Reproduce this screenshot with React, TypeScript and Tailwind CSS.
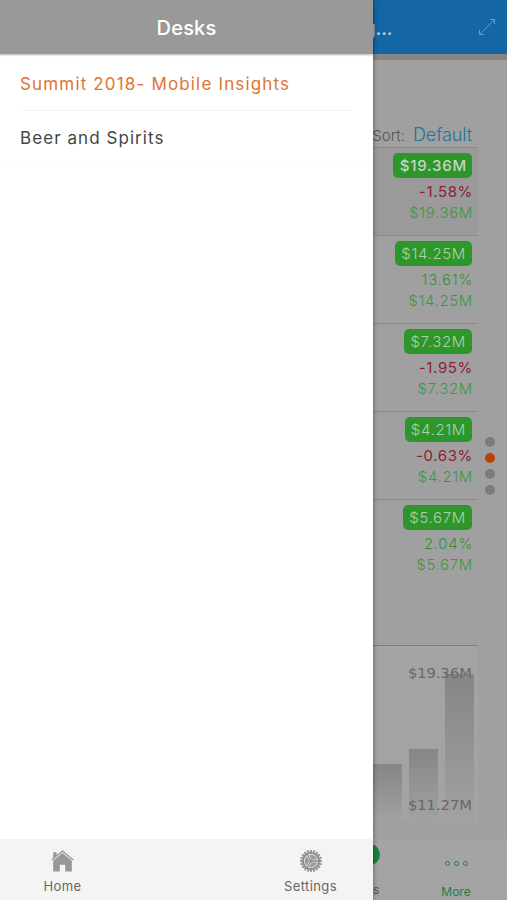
import { clsx } from "clsx";

const metrics = [
  { value: "$19.36M", change: "-1.58%", down: true, selected: true },
  { value: "$14.25M", change: "13.61%", down: false, selected: false },
  { value: "$7.32M", change: "-1.95%", down: true, selected: false },
  { value: "$4.21M", change: "-0.63%", down: true, selected: false },
  { value: "$5.67M", change: "2.04%", down: false, selected: false },
];

const bars = [56, 71, 146];
const gearTeeth = Array.from({ length: 20 }, (_, i) => i * 18);

function HomeIcon() {
  return (
    <svg className="h-6 w-6" viewBox="0 0 24 24" fill="#979797">
      <path d="M2.2 3.2h3.4v3.6L2.2 9.800z" />
      <path d="M11.500 1.200 .3 10.600l.7.8L11.500 2.900 22 11.400l.7-.8z" />
      <path d="M11.500 4.100 2.200 11.500V22.600h6.600v-6.800h5.400v6.800h6.600V11.500z" />
    </svg>
  );
}

function GearIcon() {
  return (
    <svg className="h-6 w-6" viewBox="0 0 24 24" fill="none" stroke="#8e8e8e">
      {gearTeeth.map((angle) => (
        <path key={angle} d="M11 3.200 11.400 1h1.200l.4 2.200z" fill="#8e8e8e" strokeWidth=".3" transform={`rotate(${angle} 12 12)`} />
      ))}
      <circle cx="12" cy="12" r="8" strokeWidth="2.200" />
      <circle cx="12" cy="12" r="6.600" fill="#9c9c9c" stroke="#dedede" strokeWidth=".8" />
      <path d="M12 12H19M12 12 8.500 5.940M12 12 8.500 18.060" stroke="#e2e2e2" strokeWidth="2.800" />
      <path d="M12 12H19.500M12 12 8.250 5.500M12 12 8.250 18.500" strokeWidth="1.300" />
      <circle cx="12" cy="12" r="1.700" fill="#8e8e8e" stroke="none" />
    </svg>
  );
}

function ExpandIcon() {
  return (
    <svg className="h-[18px] w-[18px]" viewBox="0 0 18 18" fill="none" stroke="#6a9dc5" strokeWidth="1">
      <path d="M1.500 16.500 16.500 1.500M12 1.500h4.500V6M1.500 12v4.500H6" />
    </svg>
  );
}

function Drawer() {
  return (
    <aside className="relative z-10 flex w-[373px] shrink-0 flex-col bg-white shadow-[0_0_5px_rgba(0,0,0,0.45)]">
      <header className="flex h-[54px] items-center justify-center bg-[#999999] pt-px text-[20px] font-medium tracking-[0.2px] text-white shadow-[0_1px_2px_rgba(0,0,0,0.3)]">
        Desks
      </header>
      <nav className="flex flex-1 flex-col pl-5 text-[17px] tracking-[1.160px]">
        <div className="mr-[21px] flex h-[57px] items-center border-b border-[#f4f4f4] pt-[5px] text-[#df7432]">
          Summit 2018- Mobile Insights
        </div>
        <div className="-ml-5 flex h-[55px] items-center border-b border-[#fbfbfb] pt-px pl-5 tracking-[1.060px] text-[#444444]">
          Beer and Spirits
        </div>
      </nav>
      <footer className="flex h-[61px] justify-between bg-[#f4f4f4] text-[13px] tracking-[0.4px] text-[#666666]">
        <div className="flex w-[125px] flex-col items-center pt-[10px]">
          <HomeIcon />
          <span className="mt-[3px] leading-5">Home</span>
        </div>
        <div className="flex w-[125px] flex-col items-center pt-[10px]">
          <GearIcon />
          <span className="mt-[3px] leading-5">Settings</span>
        </div>
      </footer>
    </aside>
  );
}

function MetricRow({ value, change, down, selected }: (typeof metrics)[number]) {
  return (
    <div
      className={clsx(
        "flex h-[88px] flex-col items-end border-t border-[#8b8b8b] pt-[5px] pr-[5px] text-[15px] font-light tracking-[0.650px]",
        selected && "bg-[#9a9a9a]",
      )}
    >
      <span
        className={clsx(
          "mr-px flex h-[25px] items-center rounded-[5px] bg-[#2d972b] pt-[2px]",
          selected ? "pr-[5px] pl-[7px] font-medium tracking-[0.8px] text-[#c5d5c4]" : "px-[6px] text-[#acd0ab]",
        )}
      >
        {value}
      </span>
      <span className={clsx("mt-[3px] leading-[21px]", down ? "font-normal text-[#8b2038]" : "text-[#359039]")}>{change}</span>
      <span className="leading-[21px] text-[#3d9845]">{value}</span>
    </div>
  );
}

function Dashboard() {
  return (
    <main className="flex min-w-0 flex-1 flex-col overflow-hidden bg-[#a0a0a0]">
      <header className="flex h-[54px] items-center justify-between bg-[#1466a5] pr-[11px] text-[19px] font-medium text-[#b5cbdc]">
        <span className="-ml-[9px] pt-1 tracking-[-0.2px]">g...</span>
        <ExpandIcon />
      </header>
      <div className="h-[6px] bg-[#858585]" />
      <div className="flex h-[785px] justify-between">
        <div className="w-[105px]">
          <div className="flex h-[87px] items-end justify-end pr-[6px]">
            <span className="mr-2 pt-px text-[15px] leading-[22px] font-light text-[#555555]">Sort:</span>
            <span className="text-[18px] leading-6 font-light tracking-[-0.1px] text-[#22739f]">Default</span>
          </div>
          {metrics.map((metric) => (
            <MetricRow key={metric.value} {...metric} />
          ))}
          <div className="mt-[58px] h-[176px] border-t border-[#7c7c7c] bg-[#a3a3a3]">
            <div className="relative flex h-[174px] items-end gap-[7px] pr-1">
              {bars.map((height) => (
                <div
                  key={height}
                  className="w-[29px] shrink-0 bg-linear-to-b from-[#868686] to-[#a1a1a1]"
                  style={{ height }}
                />
              ))}
              <div className="absolute top-[17px] right-[6px] flex h-[152px] flex-col justify-between font-['DejaVu_Sans'] text-[14.700px] leading-5 text-[#686868]">
                <span>$19.36M</span>
                <span>$11.27M</span>
              </div>
            </div>
          </div>
        </div>
        <div className="flex w-[22px] flex-col gap-[6px] pt-[377px]">
          <span className="h-[10px] w-[10px] rounded-full bg-[#7c7c7c]" />
          <span className="h-[10px] w-[10px] rounded-full bg-[#b84505]" />
          <span className="h-[10px] w-[10px] rounded-full bg-[#7c7c7c]" />
          <span className="h-[10px] w-[10px] rounded-full bg-[#7c7c7c]" />
        </div>
      </div>
      <footer className="flex h-[61px] justify-between bg-[#a4a4a4] pr-[24px] text-[12px]">
        <div className="flex flex-col">
          <span className="mt-[5px] -ml-[15px] h-[22px] w-[22px] rounded-full bg-[#198238]" />
          <span className="mt-[15px] leading-5 text-[#555555]">s</span>
        </div>
        <div className="flex w-[54px] flex-col items-center pt-[22px] text-[#207c4b]">
          <div className="flex gap-1">
            <span className="h-[5px] w-[5px] rounded-full border border-current" />
            <span className="h-[5px] w-[5px] rounded-full border border-current" />
            <span className="h-[5px] w-[5px] rounded-full border border-current" />
          </div>
          <span className="mt-[16px] leading-5">More</span>
        </div>
      </footer>
    </main>
  );
}

export default function App() {
  return (
    <div className="flex h-[900px] w-[507px] overflow-hidden font-['Inter',sans-serif]">
      <Drawer />
      <Dashboard />
    </div>
  );
}
